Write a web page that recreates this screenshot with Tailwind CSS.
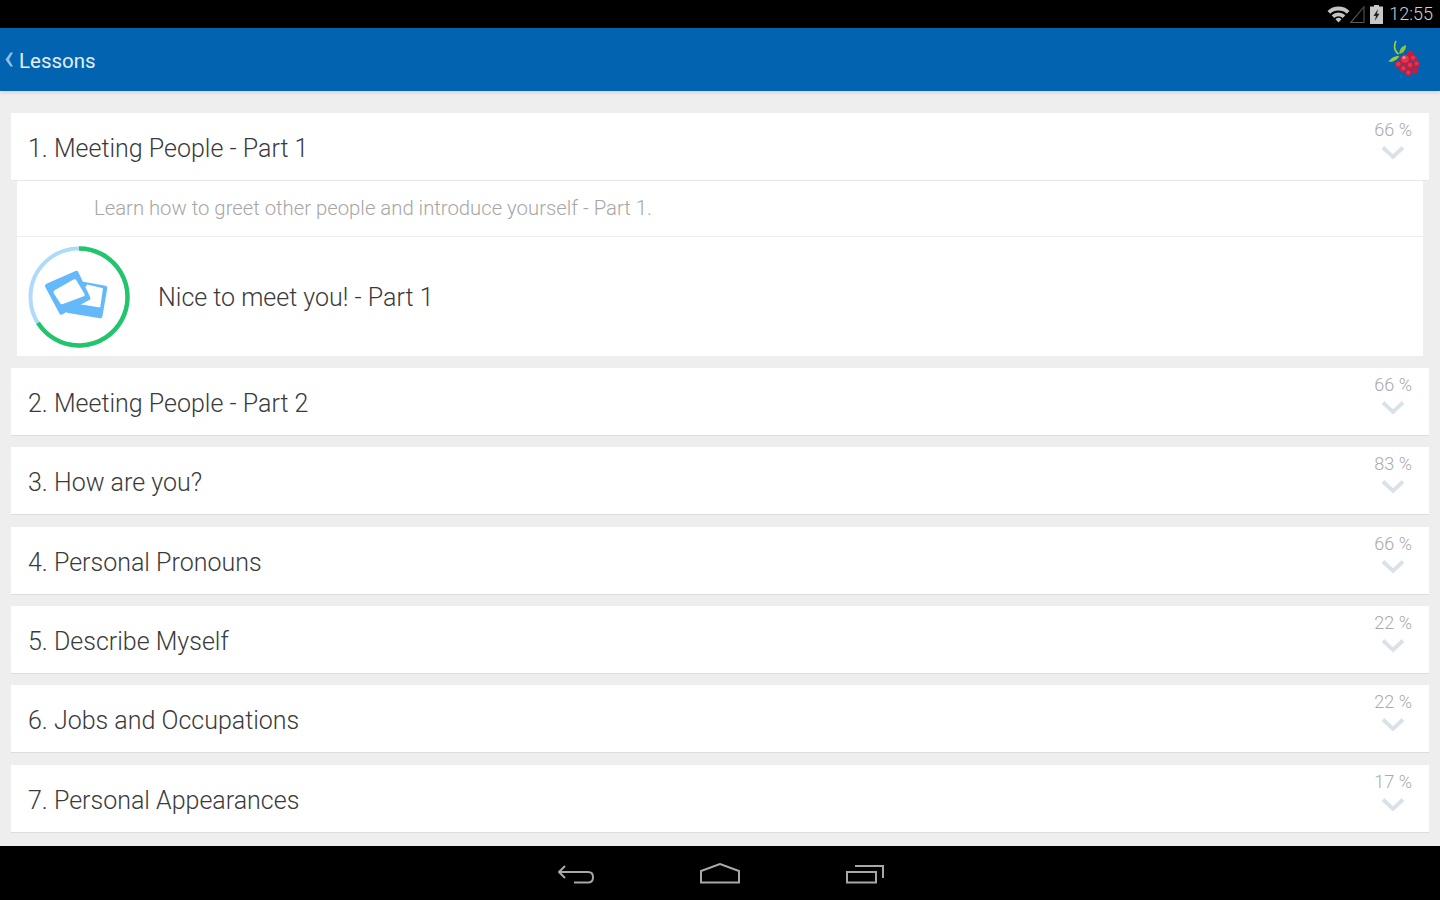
<!DOCTYPE html>
<html>
<head>
<meta charset="UTF-8" />
<title>Lessons</title>
<script src="https://cdn.jsdelivr.net/npm/@tailwindcss/browser@4"></script>
</head>
<body class="w-[1440px] h-[900px] overflow-hidden flex flex-col bg-[#eeeeee] font-['Roboto',sans-serif]">
	<!-- status bar -->
	<div class="h-[28px] bg-black flex items-center justify-end pr-[7px] text-[#b4b4b4] shrink-0">
		<svg width="23" height="18" viewBox="0 0 23 18" class="mt-[-1px]">
			<path d="M0.5 6 A16 16 0 0 1 22.5 6 L19.8 8.8 A12 12 0 0 0 3.2 8.8 Z" fill="#c4c4c4"/>
			<path d="M4.6 10.2 A10 10 0 0 1 18.4 10.2 L15.8 12.9 A6.5 6.5 0 0 0 7.2 12.9 Z" fill="#c4c4c4"/>
			<path d="M8.5 14.2 A4.5 4.5 0 0 1 14.5 14.2 L11.5 17.5 Z" fill="#c4c4c4"/>
		</svg>
		<svg width="16" height="18" viewBox="0 0 16 18" class="ml-[-1px]"><path d="M15.5 0.5 V18 H0.5 Z M14.5 3 L3 17 H14.5 Z" fill="#5a5a5a" fill-rule="evenodd"/></svg>
		<svg width="13" height="19" viewBox="0 0 13 19" class="ml-[5px]">
			<path d="M4 0 H9 V1.5 H13 V19 H0 V1.5 H4 Z" fill="#c8c8c8"/>
			<path d="M8 4 L3.5 11 H6 L4.8 16 L9.5 8.8 H7 Z" fill="#222"/>
		</svg>
		<span class="ml-[6px] text-[18px] font-light leading-none text-[#d0d0d0]">12:55</span>
	</div>

	<!-- action bar -->
	<div class="h-[63px] bg-[#0264b0] shadow-[0_2px_3px_rgba(0,0,0,0.1)] flex items-center justify-between pl-[5px] pr-[19px] shrink-0 relative">
		<div class="flex items-center mt-[3px]">
			<svg width="8" height="15" viewBox="0 0 8 15" class="mt-[-3px]"><path d="M5.5 0.5 H8 L4 7.5 L8 14.5 H5.5 L0.5 7.5 Z" fill="#8fc0e6"/></svg>
			<span class="ml-[6px] text-[20.5px] text-[#e3eef8] leading-none">Lessons</span>
		</div>
		<svg width="34" height="38" viewBox="0 0 34 38" class="mt-[-2px]">
			<path d="M9 0.8 C6.5 5 7 11 11.5 14" fill="none" stroke="#a6cf2e" stroke-width="1.6"/>
			<path d="M12.3 14 C12.3 9 15 6 19 5 C19 9.5 17 13 12.3 14 Z" fill="#8fc531"/>
			<path d="M1.3 21.7 C4 18 8 15.7 12.3 15.7 C11 19.5 6 22.5 1.3 21.7 Z" fill="#9acb34"/>
			<g fill="#c91c3c">
				<circle cx="23" cy="14" r="3.2"/><circle cx="26.3" cy="18.3" r="3.6"/><circle cx="29.7" cy="24" r="3.2"/>
				<circle cx="11.3" cy="24.7" r="3.6"/><circle cx="23" cy="25.7" r="3.6"/><circle cx="16.3" cy="29" r="3.6"/>
				<circle cx="28" cy="30.7" r="2.9"/><circle cx="21.3" cy="33" r="3.2"/>
				<circle cx="18" cy="19.7" r="5.2"/>
			</g>
			<g fill="#e0384f">
				<circle cx="18" cy="19" r="3.8"/><circle cx="26" cy="17.6" r="2.2"/><circle cx="23" cy="25" r="2.2"/>
				<circle cx="11.3" cy="24" r="2.2"/><circle cx="16.3" cy="28.3" r="2.2"/><circle cx="29.5" cy="23.4" r="1.9"/>
				<circle cx="21.3" cy="32.4" r="1.9"/>
			</g>
			<circle cx="17" cy="17.5" r="1.6" fill="#f38b93"/>
		</svg>
	</div>

	<!-- lesson list -->
	<div class="flex-1 min-h-0 overflow-hidden px-[11px] pt-[22px] flex flex-col">
		<div class="shrink-0">
			<div class="h-[68px] bg-white border-b border-[#e6e6e6] flex justify-between pl-[17px] pr-[17px]">
				<span class="self-center mt-[4px] text-[25px] font-light text-[#3a3a3a] leading-none">1. Meeting People - Part 1</span>
				<div class="flex flex-col items-center pt-[8px]">
					<span class="text-[18px] font-light text-[#aaaaaa] leading-[18px]">66 %</span>
					<svg width="24" height="15" viewBox="0 0 24 15" class="mt-[6px]"><path d="M2 2.5 L12 12 L22 2.5" fill="none" stroke="#d9e2e8" stroke-width="3.8"/></svg>
				</div>
			</div>
			<div class="mx-[6px] bg-white">
				<div class="h-[56px] border-b border-[#eeeeee] pl-[77px] flex items-center text-[20.3px] font-light text-[#a6a6a6] leading-none">Learn how to greet other people and introduce yourself - Part 1.</div>
				<div class="h-[119px] flex items-center pl-[10px]">
					<svg width="104" height="104" viewBox="0 0 104 104" class="mt-[1px] ml-[-0.5px]">
						<circle cx="52" cy="52" r="48.5" fill="none" stroke="#aedbfb" stroke-width="4"/>
						<path d="M52 3.5 A48.5 48.5 0 1 1 11 77.9" fill="none" stroke="#22c56b" stroke-width="4.4"/>
						<path d="M56.3 36.7 L78.5 40.7 Q80.6 41 80.3 43 L75.4 71.5 Q75 73.6 73 73.2 L39.7 67.7 Z" fill="#63b9fa"/>
						<path d="M60.3 39.5 L76 43.3 L73.2 62.5 L45 58 Z" fill="#fff"/>
						<path d="M20 38.4 L48.5 26 Q50.4 25.2 51.3 27 L63.3 52.5 Q64 54.2 62.3 55 L35 69.6 Q33.2 70.4 32.4 68.6 L18 41.5 Q17.3 39.6 20 38.4 Z" fill="#63b9fa"/>
						<path d="M28 45 L46.5 34.6 Q48.5 33.6 49.3 35.2 L57.6 49 Q58.4 50.5 56.8 51.2 L36 59 Q34 59.7 33.2 58.2 L26.6 48 Q26 46.2 28 45 Z" fill="#fff"/>
					</svg>
					<span class="ml-[27.5px] mt-[2px] text-[25px] font-light text-[#3a3a3a] leading-none">Nice to meet you! - Part 1</span>
				</div>
			</div>
		</div>

		<div class="flex flex-col gap-[11.33px] mt-[12px] shrink-0">
			<div class="h-[68px] bg-white border-b border-[#dddddd] flex justify-between pl-[17px] pr-[17px]">
				<span class="self-center mt-[4px] text-[25px] font-light text-[#3a3a3a] leading-none">2. Meeting People - Part 2</span>
				<div class="flex flex-col items-center pt-[8px]">
					<span class="text-[18px] font-light text-[#aaaaaa] leading-[18px]">66 %</span>
					<svg width="24" height="15" viewBox="0 0 24 15" class="mt-[6px]"><path d="M2 2.5 L12 12 L22 2.5" fill="none" stroke="#d9e2e8" stroke-width="3.8"/></svg>
				</div>
			</div>
			<div class="h-[68px] bg-white border-b border-[#dddddd] flex justify-between pl-[17px] pr-[17px]">
				<span class="self-center mt-[4px] text-[25px] font-light text-[#3a3a3a] leading-none">3. How are you?</span>
				<div class="flex flex-col items-center pt-[8px]">
					<span class="text-[18px] font-light text-[#aaaaaa] leading-[18px]">83 %</span>
					<svg width="24" height="15" viewBox="0 0 24 15" class="mt-[6px]"><path d="M2 2.5 L12 12 L22 2.5" fill="none" stroke="#d9e2e8" stroke-width="3.8"/></svg>
				</div>
			</div>
			<div class="h-[68px] bg-white border-b border-[#dddddd] flex justify-between pl-[17px] pr-[17px]">
				<span class="self-center mt-[4px] text-[25px] font-light text-[#3a3a3a] leading-none">4. Personal Pronouns</span>
				<div class="flex flex-col items-center pt-[8px]">
					<span class="text-[18px] font-light text-[#aaaaaa] leading-[18px]">66 %</span>
					<svg width="24" height="15" viewBox="0 0 24 15" class="mt-[6px]"><path d="M2 2.5 L12 12 L22 2.5" fill="none" stroke="#d9e2e8" stroke-width="3.8"/></svg>
				</div>
			</div>
			<div class="h-[68px] bg-white border-b border-[#dddddd] flex justify-between pl-[17px] pr-[17px]">
				<span class="self-center mt-[4px] text-[25px] font-light text-[#3a3a3a] leading-none">5. Describe Myself</span>
				<div class="flex flex-col items-center pt-[8px]">
					<span class="text-[18px] font-light text-[#aaaaaa] leading-[18px]">22 %</span>
					<svg width="24" height="15" viewBox="0 0 24 15" class="mt-[6px]"><path d="M2 2.5 L12 12 L22 2.5" fill="none" stroke="#d9e2e8" stroke-width="3.8"/></svg>
				</div>
			</div>
			<div class="h-[68px] bg-white border-b border-[#dddddd] flex justify-between pl-[17px] pr-[17px]">
				<span class="self-center mt-[4px] text-[25px] font-light text-[#3a3a3a] leading-none">6. Jobs and Occupations</span>
				<div class="flex flex-col items-center pt-[8px]">
					<span class="text-[18px] font-light text-[#aaaaaa] leading-[18px]">22 %</span>
					<svg width="24" height="15" viewBox="0 0 24 15" class="mt-[6px]"><path d="M2 2.5 L12 12 L22 2.5" fill="none" stroke="#d9e2e8" stroke-width="3.8"/></svg>
				</div>
			</div>
			<div class="h-[68px] bg-white border-b border-[#dddddd] flex justify-between pl-[17px] pr-[17px]">
				<span class="self-center mt-[4px] text-[25px] font-light text-[#3a3a3a] leading-none">7. Personal Appearances</span>
				<div class="flex flex-col items-center pt-[8px]">
					<span class="text-[18px] font-light text-[#aaaaaa] leading-[18px]">17 %</span>
					<svg width="24" height="15" viewBox="0 0 24 15" class="mt-[6px]"><path d="M2 2.5 L12 12 L22 2.5" fill="none" stroke="#d9e2e8" stroke-width="3.8"/></svg>
				</div>
			</div>
		</div>
	</div>

	<!-- nav bar -->
	<div class="h-[54px] bg-black shrink-0 flex items-center justify-center gap-[106px] pt-[2px] pl-[2px]">
		<svg width="36" height="22" viewBox="0 0 36 22"><path d="M7 3 L1 9 L7 15 M1 9 H30 Q35 9 35 14.2 Q35 19.5 30 19.5 H16" fill="none" stroke="#a8a8a8" stroke-width="2"/></svg>
		<svg width="40" height="22" viewBox="0 0 40 22"><path d="M1 19.5 V8 L20 1 L39 8 V19.5 Z" fill="none" stroke="#a8a8a8" stroke-width="2"/></svg>
		<svg width="38" height="22" viewBox="0 0 38 22"><path d="M1 9 H30 V19.5 H1 Z M9 3 H37 V15" fill="none" stroke="#a8a8a8" stroke-width="2"/></svg>
	</div>
</body>
</html>
